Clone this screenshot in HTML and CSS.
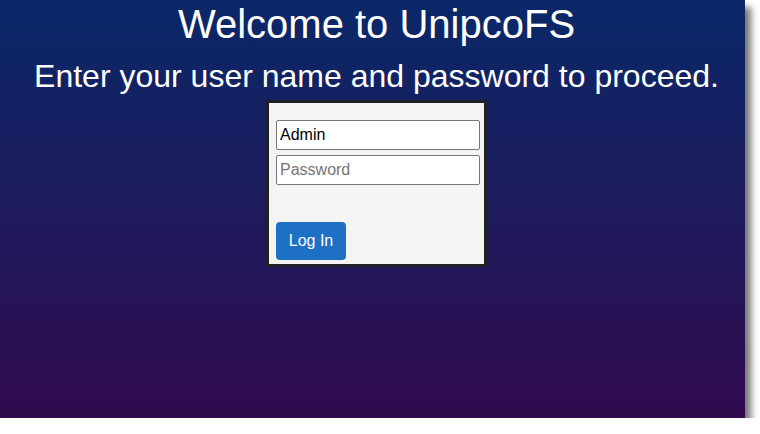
FILE: index.html
```html
<!DOCTYPE html>
<html>
<head>
<meta charset="utf-8">
<link rel="stylesheet" href="styles.css">
</head>
<body>
<div class="screen">
  <h1 class="title">Welcome to UnipcoFS</h1>
  <h2 class="subtitle">Enter your user name and password to proceed.</h2>
  <form class="login">
    <input class="field" type="text" value="Admin">
    <input class="field" type="password" placeholder="Password">
    <button class="btn" type="button">Log In</button>
  </form>
</div>
</body>
</html>
```
FILE: styles.css
```css
html, body {
  margin: 0;
  padding: 0;
  background: #ffffff;
}
.screen {
  width: 745px;
  height: 418px;
  background: linear-gradient(to bottom, #0a2868 0%, #1c1c5e 45%, #300b4e 100%);
  box-shadow: 6px 7px 7px rgba(0, 0, 0, 0.55);
  display: flex;
  flex-direction: column;
  align-items: center;
  font-family: "Liberation Sans", Arial, sans-serif;
  color: #ffffff;
  box-sizing: border-box;
  padding: 2px 0 0 8px;
}
.title {
  margin: 0;
  font-size: 40px;
  font-weight: normal;
  line-height: 45px;
}
.subtitle {
  margin: 11px 0 0;
  font-size: 32px;
  font-weight: normal;
  line-height: 36px;
}
.login {
  margin-top: 6px;
  width: 221px;
  box-sizing: border-box;
  border: 3px solid #202124;
  background: #f4f4f4;
  padding: 17px 4px 4px 7px;
  display: flex;
  flex-direction: column;
  align-items: flex-start;
}
.field {
  width: 204px;
  height: 30px;
  box-sizing: border-box;
  border: 1px solid #767676;
  border-radius: 2px;
  background: #ffffff;
  font-family: "Liberation Sans", Arial, sans-serif;
  font-size: 16px;
  color: #000000;
  padding: 1px 3px;
  margin: 0 0 5px;
}
.field::placeholder {
  color: #757575;
}
.btn {
  margin-top: 32px;
  width: 70px;
  height: 38px;
  border: none;
  border-radius: 4px;
  background: #1d70c4;
  color: #ffffff;
  font-family: "Liberation Sans", Arial, sans-serif;
  font-size: 16px;
  padding: 0;
}
```
